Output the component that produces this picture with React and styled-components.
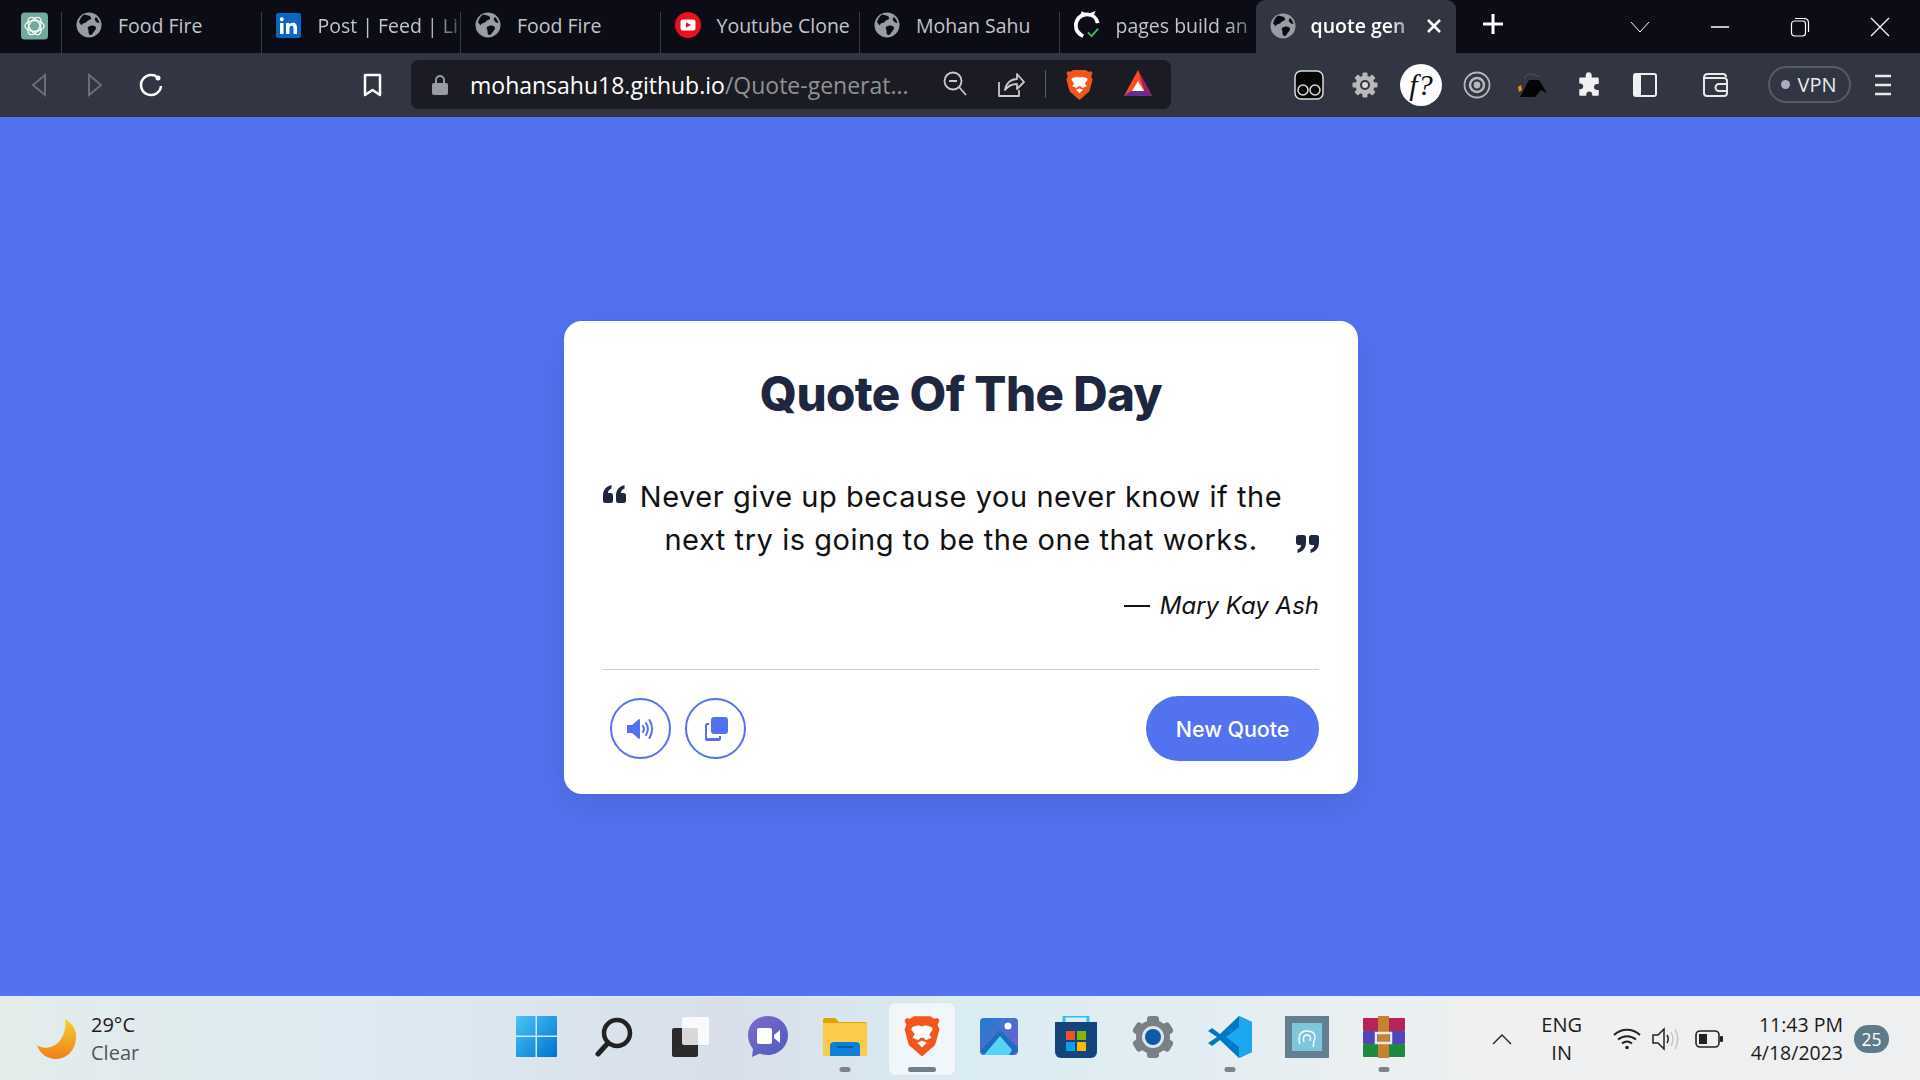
import React from "react";
import styled, { createGlobalStyle } from "styled-components";

const Global = createGlobalStyle`
  html, body { margin: 0; padding: 0; overflow: hidden; }
  body { font-family: "Open Sans", "Noto Sans", sans-serif; }
`;

const Screen = styled.div`
  width: 1920px; height: 1080px; display: flex; flex-direction: column; overflow: hidden;
`;

/* ---------- tab strip ---------- */
const TabStrip = styled.div`
  height: 53px; background: #0b0c16; display: flex; align-items: flex-end; flex: none;
`;
const Pinned = styled.div`
  width: 62px; height: 41px; box-sizing: border-box; padding: 0 13px 0 21px; display: flex; align-items: flex-start;
  border-right: 1px solid #3a3c44;
`;
const Tab = styled.div`
  width: ${p => p.$w || 199.5}px; height: ${p => p.$active ? 53 : 41}px; box-sizing: border-box; flex: none;
  display: flex; align-items: ${p => p.$active ? "center" : "flex-start"};
  gap: ${p => p.$active ? 15 : 16}px; padding: ${p => p.$active ? "0 14px 2px 14px" : "0 0 0 14px"};
  background: ${p => p.$active ? "#323642" : "transparent"};
  border-right: ${p => p.$active || p.$noSep ? "none" : "1px solid #3a3c44"};
  border-radius: ${p => p.$active ? "9px 9px 0 0" : "0"};
  color: ${p => p.$active ? "#fff" : "#c3c5cb"};
  font-size: 19.5px; line-height: 26px;
  font-weight: ${p => p.$active ? 600 : 400};
`;
const FavBox = styled.span`
  width: 26px; height: 26px; flex: none; display: flex; align-items: center; justify-content: center;
`;
const TabLabel = styled.span`
  flex: 1; white-space: nowrap; margin-top: ${p => p.$active ? 0 : 1}px;
  ${p => p.$fade && `-webkit-mask-image: linear-gradient(90deg,#000 78%,rgba(0,0,0,.35) 100%); mask-image: linear-gradient(90deg,#000 78%,rgba(0,0,0,.35) 100%);`}
`;
const NewTab = styled.div`
  width: 40px; height: 41px; margin-left: 17px; display: flex; align-items: flex-start; justify-content: center; padding-top: 1px; flex: none;
`;
const WindowControls = styled.div`
  margin-left: auto; height: 53px; display: flex; align-items: center;
`;
const WinBtn = styled.div`
  width: ${p => p.$w || 80}px; display: flex; justify-content: center;
  margin-right: ${p => p.$mr || 0}px;
`;

/* ---------- toolbar ---------- */
const Toolbar = styled.div`
  height: 64px; background: #323642; flex: none; display: flex; align-items: center; padding: 0 0 1px 30px; box-sizing: border-box;
`;
const NavIcon = styled.div`
  width: ${p => p.$w || 56}px; display: flex; align-items: center; justify-content: ${p => p.$start ? "flex-start" : "center"}; flex: none;
`;
const AddressBar = styled.div`
  width: 760px; height: 49px; margin-left: 22px; background: #1b1c23; border-radius: 8px; flex: none;
  display: flex; align-items: center; padding: 0 0 0 21px; box-sizing: border-box;
`;
const Url = styled.div`
  margin-left: 22px; width: 442px; flex: none; font-size: 23px; color: #fff; white-space: nowrap;
  span { color: #8f9197; }
`;
const AddrIcons = styled.div`
  display: grid; grid-template-columns: 56px 56px 12px 56px 62px; justify-items: center; align-items: center; margin-left: 15px;
`;
const Sep = styled.div`
  width: 1px; height: 28px; background: #5a5c64;
`;
const ExtRow = styled.div`
  margin-left: 110px; display: flex; align-items: center;
`;
const Ext = styled.div`
  width: ${p => p.$w || 56}px; display: flex; justify-content: center; align-items: center; flex: none;
`;
const Fx = styled.div`
  width: 42px; height: 42px; border-radius: 50%; background: #fff; color: #111; font-family: "Liberation Serif", serif;
  font-style: italic; font-size: 30px; line-height: 42px; text-align: center;
`;
const Vpn = styled.div`
  width: 83px; height: 37px; box-sizing: border-box; border: 2px solid #575a68; border-radius: 19px; color: #e9eaf0;
  font-size: 20px; display: flex; align-items: center; justify-content: center; gap: 7px;
  &::before { content: ""; width: 9px; height: 9px; border-radius: 50%; background: #a9adbe; }
`;

/* ---------- page ---------- */
const Page = styled.main`
  flex: 1; background: #5372f0; display: flex; align-items: center; justify-content: center; padding: 2px 0 0 2px;
`;
const Card = styled.section`
  width: 794px; box-sizing: border-box; background: #fff; border-radius: 18px; padding: 39px 39px 33px;
  box-shadow: 0 12px 35px rgba(0,0,0,.1); color: #000;
  font-family: "Inter", "Open Sans", sans-serif;
`;
const Title = styled.h1`
  margin: 0; text-align: center; font-size: 47.5px; line-height: 68px; font-weight: 800; color: #1e2640; letter-spacing: -.6px;
`;
const QuoteArea = styled.div`
  display: flex; margin-top: 47px;
`;
const QuoteMark = styled.span`
  flex: none; width: 24px; height: 20px; color: #1e2640; display: flex;
  align-self: ${p => p.$end ? "flex-end" : "flex-start"};
  margin: ${p => p.$end ? "0 0 8px 9px" : "10px 9px 0 0"};
`;
const QuoteText = styled.p`
  flex: 1; margin: 0; text-align: center; font-size: 29px; line-height: 43px; font-weight: 400; letter-spacing: .55px; color: #111;
`;
const Author = styled.div`
  margin-top: 25px; text-align: right; font-size: 24px; line-height: 40px; font-style: italic; color: #111;
  display: flex; justify-content: flex-end; align-items: center; gap: 10px;
`;
const Dash = styled.span`
  width: 26px; height: 2px; background: #111;
`;
const Divider = styled.hr`
  margin: 43px 0 0; border: 0; height: 1px; background: #ccc;
`;
const Actions = styled.div`
  margin-top: 26px; display: flex; align-items: center; justify-content: space-between;
`;
const Round = styled.div`
  display: flex; gap: 14px; padding-left: 7px;
`;
const RoundBtn = styled.button`
  width: 61px; height: 61px; box-sizing: border-box; border: 2px solid #5372f0; border-radius: 50%; background: #fff; padding: 0;
  display: flex; align-items: center; justify-content: center; color: #5372f0;
`;
const NewQuote = styled.button`
  width: 173px; height: 65px; border: 0; border-radius: 33px; background: #5372f0; color: #fff;
  font-family: "Inter", sans-serif; font-size: 21.5px; font-weight: 500; letter-spacing: -.1px;
`;

/* ---------- taskbar ---------- */
const Taskbar = styled.footer`
  height: 84px; flex: none; display: grid; grid-template-columns: 1fr auto 1fr; align-items: center;
  background: linear-gradient(90deg,#e4eceb 0%,#deebf2 18%,#d8dfea 38%,#daecf3 50%,#e6eef1 66%,#eff0f1 78%,#eeeff0 100%);
  border-top: 1px solid #e6e8ec; box-sizing: border-box;
`;
const Weather = styled.div`
  display: flex; align-items: center; gap: 14px; padding-left: 37px;
`;
const WeatherText = styled.div`
  font-size: 20px; line-height: 28px; color: #1a1a1a;
  small { display: block; font-size: 20px; color: #555; }
`;
const Apps = styled.div`
  display: flex; align-items: center;
`;
const AppCell = styled.div`
  position: relative; width: 66px; height: 72px; margin: 0 5.5px; box-sizing: border-box;
  display: flex; align-items: center; justify-content: center; border-radius: 6px; padding-bottom: 4px;
  background: ${p => p.$active ? "#f1f6fa" : "transparent"};
  box-shadow: ${p => p.$active ? "0 0 0 1px #dce4ea" : "none"};
`;
const Running = styled.i`
  position: absolute; bottom: 3px; left: 50%; transform: translateX(-50%); height: 5px; border-radius: 3px;
  width: ${p => p.$active ? 28 : 11}px; background: ${p => p.$active ? "#6f7f8c" : "#7e8486"};
`;
const Tray = styled.div`
  justify-self: end; display: flex; align-items: center; padding-right: 31px; color: #1a1a1a;
`;
const Lang = styled.div`
  width: 70px; margin-left: 15px; text-align: center; font-size: 20px; line-height: 28px;
`;
const TrayIcons = styled.div`
  margin-left: 16px; display: flex; align-items: center; gap: 11px;
`;
const Clock = styled.div`
  margin-left: 28px; text-align: right; font-size: 19.5px; line-height: 28px;
`;
const Badge = styled.div`
  margin-left: 11px; width: 35px; height: 28px; border-radius: 14px / 14px; background: #5f7a89; color: #fff; font-size: 17.5px;
  display: flex; align-items: center; justify-content: center;
`;

/* ---------- drawings ---------- */
const Globe = ({ s = 26 }) => (
  <svg width={s} height={s} viewBox="0 0 26 26">
    <circle cx="13" cy="13" r="12.5" fill="#9a9ca3" />
    <path d="M8 2.500c3 1 6 .5 7 3s-3 2-4 4-4 1-5 3-1-1-3-2c.5-3 2.500-6.500 5-8zM14 14c3-1 6 0 6 2s-2 3-3 5-3 3-4 1 0-3-1-5 0-2 2-3zM20 5c2 2 3 4 3.500 6-2 0-3-1-4-2s-1-3 .5-4z" fill="#0b0c16" />
  </svg>
);
const ChatGpt = () => (
  <svg width="28" height="28" viewBox="0 0 28 28">
    <rect width="28" height="28" rx="4" fill="#74aa9c" />
    <g fill="none" stroke="#fff" strokeWidth="1.200">
      <ellipse cx="14" cy="14" rx="10" ry="5.500" />
      <ellipse cx="14" cy="14" rx="10" ry="5.500" transform="rotate(60 14 14)" />
      <ellipse cx="14" cy="14" rx="10" ry="5.500" transform="rotate(120 14 14)" />
    </g>
  </svg>
);
const LinkedIn = () => (
  <svg width="25" height="25" viewBox="0 0 25 25">
    <rect width="25" height="25" rx="2" fill="#0a66c2" />
    <path d="M4 10h3.500v11H4zM5.700 4.200a2 2 0 110 4 2 2 0 010-4zM10 10h3.300v1.500c.7-1.100 2-1.800 3.500-1.800 3.200 0 4.200 2 4.200 5V21h-3.500v-5.500c0-1.500-.4-2.800-2-2.800s-2 1.300-2 2.800V21H10z" fill="#fff" />
  </svg>
);
const YouTube = () => (
  <svg width="26" height="26" viewBox="0 0 26 26">
    <circle cx="13" cy="13" r="13" fill="#e8121d" />
    <rect x="5.500" y="7.500" width="15" height="11" rx="2.500" fill="#fff" />
    <path d="M11 10.200l5 2.800-5 2.800z" fill="#e8121d" />
  </svg>
);
const GhCheck = () => (
  <svg width="28" height="30" viewBox="0 0 28 30">
    <path d="M10 27C5 25 2 20.500 2 15.500 2 9 7 3.500 14 3.500c6 0 10.500 4 11.500 9.500" fill="none" stroke="#fff" strokeWidth="4" />
    <path d="M8 5l1-3 4 2M20 5l1-3-5 2M8 24c-2 0-3-1-4-3" fill="none" stroke="#fff" strokeWidth="2.500" />
    <path d="M15 23l4 4 7-8" fill="none" stroke="#2fc55c" strokeWidth="2" />
  </svg>
);
const Lion = ({ s = 30 }) => (
  <svg width={s} height={s * 1.17} viewBox="0 0 30 35">
    <path d="M8 1h14l3 2 3-.5 1.500 2L28 8l1.500 4L26.500 23c-.5 2-1.500 3-3.500 4.500L15 34.500 7 27.500C5 26 4 25 3.500 23L.5 12 2 8 .5 4.500 2 2.500 5 3z" fill="#f1561f" />
    <path d="M7 10l5-1.500 3 1 3-1L23 10l1 2-3 4 2 3-5 2-1.500-2h-3L12 21l-5-2 2-3-3-4zM11 23l4-1.500 4 1.500-4 4z" fill="#fff" />
  </svg>
);
const Bat = () => (
  <svg width="30" height="30" viewBox="0 0 30 30">
    <path d="M15 1L29 27H1z" fill="#ff4724" />
    <path d="M15 1L29 27l-7-3z" fill="#9e1f63" />
    <path d="M1 27h28l-7-5H8z" fill="#662d91" />
    <path d="M15 12l6 10H9z" fill="#fff" />
  </svg>
);
const Stroke = ({ w = 24, h = 24, vb, c = "#fff", sw = 2, children }) => (
  <svg width={w} height={h} viewBox={vb || `0 0 ${w} ${h}`} fill="none" stroke={c} strokeWidth={sw}>{children}</svg>
);
const GearIcon = ({ s = 26, c = "#b9b9b9", hole = "#323642" }) => (
  <svg width={s} height={s} viewBox="0 0 26 26">
    <g fill={c}>
      {[0, 45, 90, 135, 180, 225, 270, 315].map(a => (
        <rect key={a} x="10.500" y="0.500" width="5" height="6" rx="1" transform={`rotate(${a} 13 13)`} />
      ))}
      <circle cx="13" cy="13" r="9.500" />
    </g>
    <circle cx="13" cy="13" r="5" fill={hole} />
    <circle cx="13" cy="13" r="3" fill="#d8d8d8" />
  </svg>
);

const QuoteGlyph = ({ flip }) => (
  <svg width="24" height="20" viewBox="0 0 24 20" fill="currentColor" style={flip ? { transform: "rotate(180deg)" } : undefined}>
    <path d="M0 11C0 5 3 1.500 8.500 0v3.500C6 4.500 5 6 5 8h2.500A2.500 2.500 0 0110 10.500v5A2.500 2.500 0 017.500 18h-5A2.500 2.500 0 010 15.500zM13 11c0-6 3-9.500 8.500-11v3.500C19 4.500 18 6 18 8h2.500a2.500 2.500 0 012.500 2.500v5a2.500 2.500 0 01-2.500 2.500h-5a2.500 2.500 0 01-2.500-2.500z" />
  </svg>
);

const IconWin = () => (
  <svg width="41" height="41" viewBox="0 0 41 41">
    <defs>
      <linearGradient id="w" x1="0" y1="0" x2="1" y2="1"><stop offset="0" stopColor="#4ac5f8" /><stop offset="1" stopColor="#0072cf" /></linearGradient>
    </defs>
    <path d="M1 0h18.500v19.500H0V1a1 1 0 011-1zM21 0h19a1 1 0 011 1v18.500H21zM0 21h19.500v20H1a1 1 0 01-1-1zM21 21h20v19a1 1 0 01-1 1H21z" fill="url(#w)" />
  </svg>
);
const IconSearch = () => (
  <svg width="38" height="40" viewBox="0 0 38 40" fill="none" stroke="#222" strokeLinecap="round">
    <circle cx="22" cy="16" r="13" strokeWidth="4.500" />
    <path d="M13 26L3 37" strokeWidth="5" />
  </svg>
);
const IconTask = () => (
  <svg width="38" height="40" viewBox="0 0 38 40">
    <rect x="0" y="11" width="26" height="29" rx="2" fill="#2b2b2b" />
    <rect x="10" y="0" width="27" height="28" rx="2" fill="#fff" fillOpacity=".82" />
  </svg>
);
const IconChat = () => (
  <svg width="40" height="42" viewBox="0 0 40 42">
    <defs><linearGradient id="c" x1="0" y1="0" x2="1" y2="1"><stop offset="0" stopColor="#7f6bc9" /><stop offset="1" stopColor="#4a5bc0" /></linearGradient></defs>
    <path d="M20 0c11 0 20 8 20 19s-9 20-20 20c-3 0-6-.5-8-1.500L4 41l1-8C2 29 0 25 0 19 0 8 9 0 20 0z" fill="url(#c)" />
    <rect x="9" y="12" width="15" height="16" rx="2" fill="#fff" />
    <path d="M26 19l6-5v13l-6-5z" fill="#fff" />
  </svg>
);
const IconFolder = () => (
  <svg width="44" height="38" viewBox="0 0 44 38">
    <path d="M0 2a2 2 0 012-2h10l4 4h26a2 2 0 012 2v6H0z" fill="#dea400" />
    <path d="M0 5h42a2 2 0 012 2v29a2 2 0 01-2 2H2a2 2 0 01-2-2z" fill="#fdcb4c" />
    <path d="M7 38V28a4 4 0 014-4h22a4 4 0 014 4v10z" fill="#0f80d7" />
    <rect x="14" y="28" width="16" height="2" fill="#0a5ea4" />
  </svg>
);
const IconPhotos = () => (
  <svg width="38" height="37" viewBox="0 0 38 37">
    <defs><linearGradient id="p" x1="0" y1="0" x2="1" y2="1"><stop offset="0" stopColor="#1e7ed0" /><stop offset="1" stopColor="#7a5dc8" /></linearGradient></defs>
    <rect width="38" height="37" rx="4" fill="url(#p)" />
    <ellipse cx="28" cy="8" rx="3.500" ry="3.500" fill="#fff" />
    <path d="M0 33l20-21 18 18v3l-6 4H6z" fill="#1c6cc0" />
    <path d="M4 37L20 18l12 14-3 5z" fill="#53d5f7" />
  </svg>
);
const IconStore = () => (
  <svg width="42" height="42" viewBox="0 0 42 42">
    <path d="M9 7V2a2 2 0 012-2h20a2 2 0 012 2v5" fill="none" stroke="#2fc0ee" strokeWidth="3" />
    <path d="M0 6h42v30a6 6 0 01-6 6H6a6 6 0 01-6-6z" fill="#14447c" />
    <rect x="11" y="15" width="9" height="9" fill="#f25022" /><rect x="22" y="15" width="9" height="9" fill="#7fba00" />
    <rect x="11" y="26" width="9" height="9" fill="#00a4ef" /><rect x="22" y="26" width="9" height="9" fill="#ffb900" />
  </svg>
);
const IconSettings = () => (
  <svg width="44" height="42" viewBox="0 0 44 42">
    <g fill="#7a8087">
      {[0, 60, 120, 180, 240, 300].map(a => (
        <rect key={a} x="16" y="0" width="12" height="10" rx="3" transform={`rotate(${a} 22 21)`} />
      ))}
      <circle cx="22" cy="21" r="17" />
    </g>
    <ellipse cx="22" cy="21" rx="11" ry="11" fill="#dfe4e8" />
    <ellipse cx="22" cy="21" rx="8" ry="8" fill="#0d5aa7" />
  </svg>
);
const IconCode = () => (
  <svg width="44" height="42" viewBox="0 0 44 42">
    <path d="M31 0l13 6v30l-13 6L12 24 4 30 0 27l9-6-9-6 4-3 8 6z" fill="#0078c8" />
    <path d="M31 0l13 6v30l-13 6zM31 11L18 21l13 10z" fill="#1ca8ef" fillRule="evenodd" />
  </svg>
);
const IconApp = () => (
  <svg width="44" height="42" viewBox="0 0 44 42">
    <rect width="44" height="42" fill="#648090" />
    <rect x="7" y="7" width="30" height="28" fill="#7fc6dc" />
    <path d="M15 28c-2-4-2-13 7-13s9 7 7 10c-1 2 0 5-1 6M19 26c-1-3-1-7 3-7s4 3 3 6" fill="none" stroke="#fff" strokeWidth="1.300" />
  </svg>
);
const IconRar = () => (
  <svg width="42" height="42" viewBox="0 0 42 42">
    <rect y="2" width="42" height="13" rx="1" fill="#b52357" />
    <rect y="15" width="42" height="13" rx="1" fill="#5046b8" />
    <rect y="28" width="42" height="13" rx="1" fill="#1f8a3e" />
    <rect x="15" y="0" width="11" height="42" fill="#c5832f" />
    <rect x="13" y="17" width="15" height="10" fill="none" stroke="#e8e8e8" strokeWidth="2.500" />
  </svg>
);

const tabs = [
  { id: 1, icon: <Globe />, label: "Food Fire" },
  { id: 2, icon: <LinkedIn />, label: "Post | Feed | Li", fade: true },
  { id: 3, icon: <Globe />, label: "Food Fire" },
  { id: 4, icon: <YouTube />, label: "Youtube Clone" },
  { id: 5, icon: <Globe />, label: "Mohan Sahu" },
  { id: 6, icon: <GhCheck />, label: "pages build an", fade: true, noSep: true, w: 196 },
];

const apps = [
  { el: <IconWin /> }, { el: <IconSearch /> }, { el: <IconTask /> }, { el: <IconChat /> },
  { el: <IconFolder />, run: true }, { el: <Lion s={36} />, run: true, active: true },
  { el: <IconPhotos /> }, { el: <IconStore /> }, { el: <IconSettings /> },
  { el: <IconCode />, run: true }, { el: <IconApp /> }, { el: <IconRar />, run: true },
];

export default function App() {
  return (
    <Screen>
      <Global />
      <TabStrip>
        <Pinned><ChatGpt /></Pinned>
        {tabs.map(t => (
          <Tab key={t.id} $noSep={t.noSep} $w={t.w}>
            <FavBox>{t.icon}</FavBox>
            <TabLabel $fade={t.fade}>{t.label}</TabLabel>
          </Tab>
        ))}
        <Tab $active $w={200}>
          <FavBox><Globe /></FavBox>
          <TabLabel $active $fade>quote gen</TabLabel>
          <Stroke w={16} h={16} sw={2.600}><path d="M2 2l12 12M14 2L2 14" /></Stroke>
        </Tab>
        <NewTab>
          <Stroke w={24} h={24} sw={3}><path d="M12 2v20M2 12h20" /></Stroke>
        </NewTab>
        <WindowControls>
          <WinBtn $w={66} $mr={7}><Stroke w={20} h={12} sw={1}><path d="M1 1l9 10 9-10" /></Stroke></WinBtn>
          <WinBtn><Stroke w={18} h={2} sw={1.500}><path d="M0 1h18" /></Stroke></WinBtn>
          <WinBtn><Stroke w={20} h={20} sw={1.200}><rect x="1.500" y="4" width="14" height="15" rx="3" /><path d="M5 1.500h9c3 0 4.500 1.500 4.500 4.500v9" /></Stroke></WinBtn>
          <WinBtn><Stroke w={20} h={20} sw={1.200}><path d="M1 1l18 18M19 1L1 19" /></Stroke></WinBtn>
        </WindowControls>
      </TabStrip>

      <Toolbar>
        <NavIcon $w={56} $start><Stroke w={18} h={24} c="#6b6e79" sw={2}><path d="M15 2L3 12l12 10z" /></Stroke></NavIcon>
        <NavIcon $w={52} $start><Stroke w={18} h={24} c="#6b6e79" sw={2}><path d="M3 2l12 10L3 22z" /></Stroke></NavIcon>
        <NavIcon $w={217} $start>
          <Stroke w={26} h={26} sw={2.500}><path d="M21 7A10 10 0 1023 14" /><circle cx="20" cy="6" r="2.500" fill="#fff" stroke="none" /></Stroke>
        </NavIcon>
        <NavIcon $w={34}><Stroke w={19} h={24} sw={2.500}><path d="M2 2h15v20l-7.500-5L2 22z" strokeLinejoin="round" /></Stroke></NavIcon>
        <AddressBar>
          <svg width="16" height="22" viewBox="0 0 16 22"><path d="M4 10V6a4 4 0 018 0v4" fill="none" stroke="#9a9ca3" strokeWidth="2" /><rect y="9" width="16" height="12" rx="2" fill="#9a9ca3" /></svg>
          <Url>mohansahu18.github.io<span>/Quote-generat...</span></Url>
          <AddrIcons>
            <Stroke w={24} h={26} c="#c9c9cc" sw={1.800}><circle cx="10" cy="10" r="8.500" /><path d="M6 10h8M16 16l7 8" /></Stroke>
            <Stroke w={28} h={28} c="#c9c9cc" sw={1.800}><path d="M2 12v14h20v-6M8 20c1-7 6-11 12-11V4l7 8-7 7v-5c-5 0-9 2-12 6z" strokeLinejoin="round" /></Stroke>
            <Sep />
            <Lion s={27} />
            <Bat />
          </AddrIcons>
        </AddressBar>
        <ExtRow>
          <Ext>
            <svg width="30" height="30" viewBox="0 0 30 30"><rect x="1" y="1" width="28" height="28" rx="6" fill="#050505" stroke="#dcdcdc" strokeWidth="1.500" /><circle cx="9" cy="20" r="5" fill="none" stroke="#ddd" strokeWidth="1.500" /><circle cx="21" cy="20" r="5" fill="none" stroke="#ddd" strokeWidth="1.500" /></svg>
          </Ext>
          <Ext><GearIcon /></Ext>
          <Ext><Fx>f?</Fx></Ext>
          <Ext>
            <Stroke w={28} h={28} c="#b7b7bb" sw={1.800}><circle cx="14" cy="14" r="12.500" /><circle cx="14" cy="14" r="7" strokeWidth="2.500" /><circle cx="14" cy="14" r="2.500" fill="#b7b7bb" /></Stroke>
          </Ext>
          <Ext>
            <svg width="32" height="28" viewBox="0 0 32 28"><path d="M3 26L12 9h10l8 13-6-3-6 7z" fill="#050505" /><path d="M1 16l3-2 1 5-3 2z" fill="#f28a1a" /><path d="M8 8c0-3 3-6 6-5l8 2" fill="none" stroke="#555" /></svg>
          </Ext>
          <Ext>
            <svg width="26" height="26" viewBox="0 0 24 24" fill="#f0f0f0"><path d="M9 2.500a2.800 2.800 0 015.500 0V5H20a1 1 0 011 1v5h-2.200a2.800 2.800 0 000 5.500H21V21a1 1 0 01-1 1h-5v-1.800a2.800 2.800 0 00-5.500 0V22H4a1 1 0 01-1-1v-5h1.500a2.800 2.800 0 000-5.500H3V6a1 1 0 011-1h5z" /></svg>
          </Ext>
          <Ext>
            <svg width="24" height="24" viewBox="0 0 24 24"><rect x="1" y="1" width="22" height="22" rx="2" fill="none" stroke="#f0f0f0" strokeWidth="2" /><rect x="1" y="1" width="7" height="22" fill="#f0f0f0" /></svg>
          </Ext>
          <Ext $w={84}>
            <Stroke w={28} h={26} c="#e8e8e8" sw={2}><path d="M3 6c0-2 1-4 4-4h15c2 0 3 1 3 3M3 6v15c0 2 1 3 3 3h17c2 0 3-1 3-3V9c0-2-1-3-3-3z" /><path d="M26 12h-8a3.500 3.500 0 000 7h8z" /></Stroke>
          </Ext>
          <Ext $w={104}><Vpn>VPN</Vpn></Ext>
          <Ext $w={44}>
            <Stroke w={18} h={22} c="#e8e8e8" sw={2.500}><path d="M1 2h16M1 11h16M1 20h16" /></Stroke>
          </Ext>
        </ExtRow>
      </Toolbar>

      <Page>
        <Card>
          <Title>Quote Of The Day</Title>
          <QuoteArea>
            <QuoteMark><QuoteGlyph /></QuoteMark>
            <QuoteText>Never give up because you never know if the next try is going to be the one that works.</QuoteText>
            <QuoteMark $end><QuoteGlyph flip /></QuoteMark>
          </QuoteArea>
          <Author><Dash /><span>Mary Kay Ash</span></Author>
          <Divider />
          <Actions>
            <Round>
              <RoundBtn aria-label="Speak">
                <svg width="28" height="24" viewBox="0 0 28 24" fill="currentColor"><path d="M0 8h5l7-6a1 1 0 011 1v18a1 1 0 01-1 1l-7-6H0z" /><g fill="none" stroke="currentColor" strokeWidth="2" strokeLinecap="round"><path d="M16 9c1.300 2 1.300 4 0 6M19 6c2.500 4 2.500 8 0 12M22.500 3c3.500 6 3.500 12 0 18" /></g></svg>
              </RoundBtn>
              <RoundBtn aria-label="Copy">
                <svg width="24" height="24" viewBox="0 0 24 24" fill="currentColor"><rect x="7" y="0" width="17" height="17" rx="3" /><path d="M5 6v2H3v13h12v-2h2v3a2 2 0 01-2 2H3a2 2 0 01-2-2V8a2 2 0 012-2z" /></svg>
              </RoundBtn>
            </Round>
            <NewQuote>New Quote</NewQuote>
          </Actions>
        </Card>
      </Page>

      <Taskbar>
        <Weather>
          <svg width="40" height="40" viewBox="0 0 40 40"><defs><linearGradient id="m" x1="0" y1="0" x2="0" y2="1"><stop offset="0" stopColor="#f5d02e" /><stop offset="1" stopColor="#f0801a" /></linearGradient></defs><path d="M28 0c8 4 12 12 11 20-1 11-9 20-20 20C9 40 2 33 0 26c4 3 10 4 16 1 9-4 14-16 12-27z" fill="url(#m)" /></svg>
          <WeatherText>29°C<small>Clear</small></WeatherText>
        </Weather>
        <Apps>
          {apps.map((a, i) => (
            <AppCell key={i} $active={a.active}>
              {a.el}
              {a.run && <Running $active={a.active} />}
            </AppCell>
          ))}
        </Apps>
        <Tray>
          <Stroke w={20} h={12} c="#222" sw={1.400}><path d="M1 11l9-9 9 9" /></Stroke>
          <Lang>ENG<br />IN</Lang>
          <TrayIcons>
            <Stroke w={28} h={22} c="#222" sw={2}><path d="M1 7c8-7 18-7 26 0M5 11.500c5.500-4.500 12.500-4.500 18 0M9 15.500c3-2.500 7-2.500 10 0" /><circle cx="14" cy="19.500" r="1.800" fill="#222" stroke="none" /></Stroke>
            <Stroke w={30} h={24} c="#222" sw={1.500}><path d="M1 8h5l6-6v20l-6-6H1zM15 8c1.500 2.500 1.500 5.500 0 8" /><path d="M19 5c2.500 4.500 2.500 9.500 0 14M23 2c3.500 6.500 3.500 13.500 0 20" stroke="#c4c4c4" /></Stroke>
            <svg width="28" height="18" viewBox="0 0 28 18" style={{ marginLeft: 2 }}><rect x="1" y="1" width="23" height="16" rx="4" fill="none" stroke="#222" strokeWidth="1.600" /><rect x="4" y="4" width="8" height="10" fill="#222" /><rect x="25" y="6" width="3" height="6" rx="1" fill="#222" /></svg>
          </TrayIcons>
          <Clock>11:43 PM<br />4/18/2023</Clock>
          <Badge>25</Badge>
        </Tray>
      </Taskbar>
    </Screen>
  );
}
